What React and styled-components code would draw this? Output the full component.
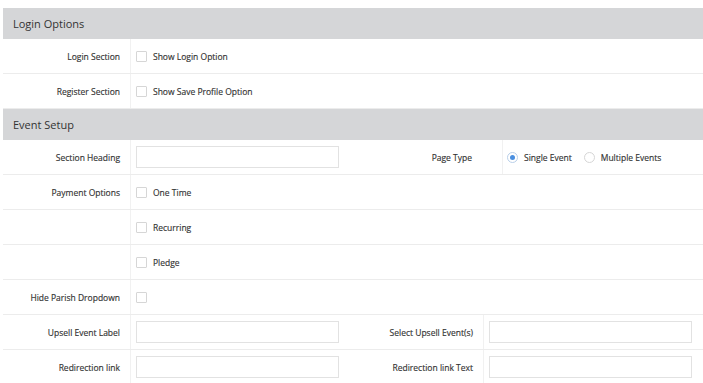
import React from 'react';
import styled, { createGlobalStyle } from 'styled-components';

const GlobalStyle = createGlobalStyle`
  html, body {
    margin: 0;
    background: #fff;
  }
  body {
    padding: 8px 0 0 3px;
    font-family: "Open Sans", "Liberation Sans", sans-serif;
    color: #444;
  }
`;

const Panel = styled.div`
  width: 700px;
`;

const SectionHeader = styled.div`
  height: 31px;
  display: flex;
  align-items: center;
  padding-left: 10px;
  background: #d5d6d8;
  color: #333;
  font-size: 11px;
`;

const Row = styled.div`
  display: grid;
  grid-template-columns: 128px 219px ${p => p.rightLabel || 134}px 1fr;
  height: 35px;
  border-bottom: 1px solid #ececec;
  box-sizing: border-box;
`;

const Label = styled.div`
  display: flex;
  align-items: center;
  justify-content: flex-end;
  padding-right: ${p => p.pad || 10}px;
  border-right: 1px solid #f1f1f1;
  font-size: 8.5px;
  color: #333;
  white-space: nowrap;
  -webkit-text-stroke: 0.15px #333;
`;

const Cell = styled.div`
  display: flex;
  align-items: center;
  padding-left: ${p => p.pad || 5}px;
  gap: 6px;
`;

const Box = styled.span`
  width: 11px;
  height: 11px;
  box-sizing: border-box;
  border: 1px solid #d6d6d6;
  border-radius: 1px;
  background: #fff;
  flex-shrink: 0;
`;

const OptionText = styled.span`
  font-size: 8.5px;
  color: #333;
  white-space: nowrap;
  -webkit-text-stroke: 0.15px #333;
  margin-right: ${p => p.gapAfter || 0}px;
`;

const TextInput = styled.div`
  width: 203px;
  height: 22px;
  box-sizing: border-box;
  border: 1px solid #e2e2e2;
  background: #fff;
`;

const Radio = styled.span`
  width: 11px;
  height: 11px;
  box-sizing: border-box;
  border-radius: 50%;
  border: 1px solid ${p => (p.checked ? '#b9cfe9' : '#d6d6d6')};
  display: flex;
  align-items: center;
  justify-content: center;
  flex-shrink: 0;

  &::after {
    content: '';
    width: 5px;
    height: 5px;
    border-radius: 50%;
    background: ${p => (p.checked ? '#4a8fe0' : 'transparent')};
  }
`;

const Check = ({ text }) => (
  <Cell>
    <Box />
    {text && <OptionText>{text}</OptionText>}
  </Cell>
);

export default function App() {
  return (
    <>
      <GlobalStyle />
      <Panel>
        <SectionHeader>Login Options</SectionHeader>
        <Row>
          <Label>Login Section</Label>
          <Check text="Show Login Option" />
        </Row>
        <Row>
          <Label>Register Section</Label>
          <Check text="Show Save Profile Option" />
        </Row>

        <SectionHeader>Event Setup</SectionHeader>
        <Row rightLabel={153}>
          <Label>Section Heading</Label>
          <Cell><TextInput /></Cell>
          <Label pad={30}>Page Type</Label>
          <Cell pad={4}>
            <Radio checked />
            <OptionText gapAfter={6}>Single Event</OptionText>
            <Radio />
            <OptionText>Multiple Events</OptionText>
          </Cell>
        </Row>
        <Row>
          <Label>Payment Options</Label>
          <Check text="One Time" />
        </Row>
        <Row>
          <Label />
          <Check text="Recurring" />
        </Row>
        <Row>
          <Label />
          <Check text="Pledge" />
        </Row>
        <Row>
          <Label>Hide Parish Dropdown</Label>
          <Check />
        </Row>
        <Row>
          <Label>Upsell Event Label</Label>
          <Cell><TextInput /></Cell>
          <Label>Select Upsell Event(s)</Label>
          <Cell><TextInput /></Cell>
        </Row>
        <Row>
          <Label>Redirection link</Label>
          <Cell><TextInput /></Cell>
          <Label>Redirection link Text</Label>
          <Cell><TextInput /></Cell>
        </Row>
      </Panel>
    </>
  );
}
